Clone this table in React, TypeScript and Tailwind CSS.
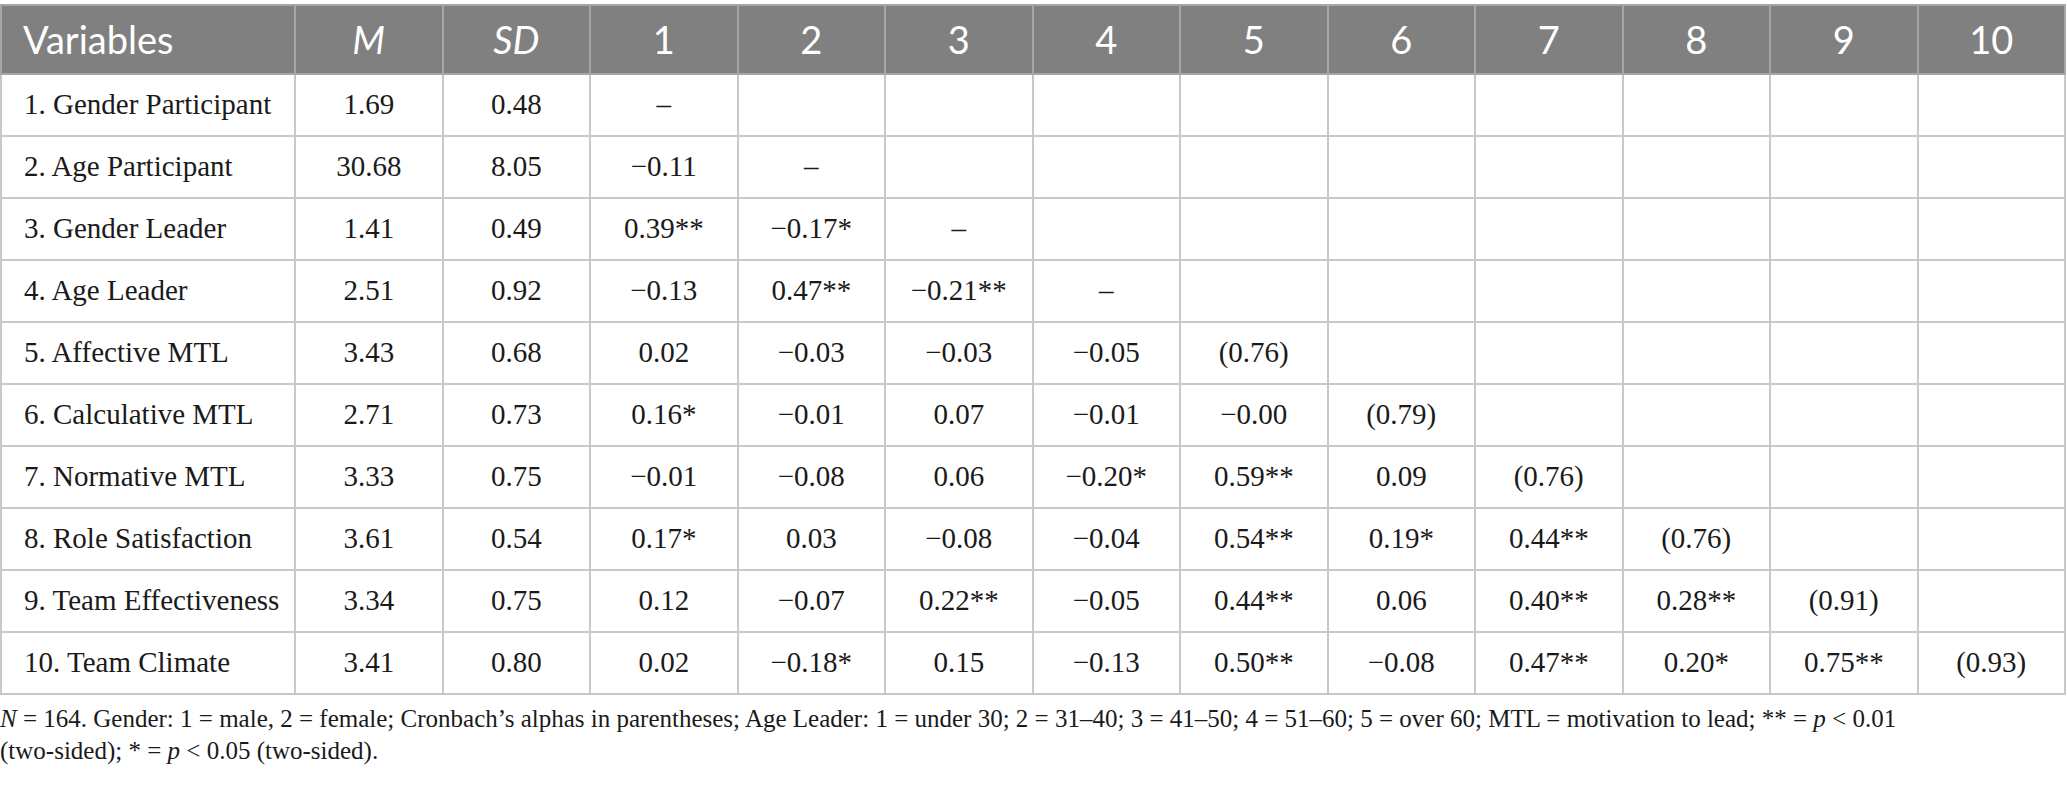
const HEADERS = ['1', '2', '3', '4', '5', '6', '7', '8', '9', '10']

const ROWS: { label: string; m: string; sd: string; cells: string[] }[] = [
  { label: '1. Gender Participant', m: '1.69', sd: '0.48', cells: ['–'] },
  { label: '2. Age Participant', m: '30.68', sd: '8.05', cells: ['−0.11', '–'] },
  { label: '3. Gender Leader', m: '1.41', sd: '0.49', cells: ['0.39**', '−0.17*', '–'] },
  { label: '4. Age Leader', m: '2.51', sd: '0.92', cells: ['−0.13', '0.47**', '−0.21**', '–'] },
  { label: '5. Affective MTL', m: '3.43', sd: '0.68', cells: ['0.02', '−0.03', '−0.03', '−0.05', '(0.76)'] },
  { label: '6. Calculative MTL', m: '2.71', sd: '0.73', cells: ['0.16*', '−0.01', '0.07', '−0.01', '−0.00', '(0.79)'] },
  { label: '7. Normative MTL', m: '3.33', sd: '0.75', cells: ['−0.01', '−0.08', '0.06', '−0.20*', '0.59**', '0.09', '(0.76)'] },
  { label: '8. Role Satisfaction', m: '3.61', sd: '0.54', cells: ['0.17*', '0.03', '−0.08', '−0.04', '0.54**', '0.19*', '0.44**', '(0.76)'] },
  { label: '9. Team Effectiveness', m: '3.34', sd: '0.75', cells: ['0.12', '−0.07', '0.22**', '−0.05', '0.44**', '0.06', '0.40**', '0.28**', '(0.91)'] },
  { label: '10. Team Climate', m: '3.41', sd: '0.80', cells: ['0.02', '−0.18*', '0.15', '−0.13', '0.50**', '−0.08', '0.47**', '0.20*', '0.75**', '(0.93)'] },
]

const serif = "font-['Liberation_Serif',serif]"

export default function App() {
  return (
    <div className="w-[2067px] h-[785px] bg-white pt-[4px] overflow-hidden">
      <table className="w-[2066px] table-fixed border-collapse">
        <colgroup>
          <col className="w-[294px]" />
          <col />
          <col />
          {HEADERS.map(h => <col key={h} />)}
        </colgroup>
        <thead>
          <tr className="h-[69px] bg-[#808080] text-white text-[38px] font-['Lato',sans-serif]">
            <th className="border-2 border-[#a6a6a6] text-left font-normal pl-[21px]">Variables</th>
            <th className="border-2 border-[#a6a6a6] font-normal italic">M</th>
            <th className="border-2 border-[#a6a6a6] font-normal italic">SD</th>
            {HEADERS.map(h => (
              <th key={h} className="border-2 border-[#a6a6a6] font-normal">{h}</th>
            ))}
          </tr>
        </thead>
        <tbody className={`${serif} text-[29px] text-[#1a1a1a]`}>
          {ROWS.map(row => (
            <tr key={row.label} className="h-[62px]">
              <td className="border-2 border-[#c8c8c8] pl-[22px] whitespace-nowrap">{row.label}</td>
              <td className="border-2 border-[#c8c8c8] text-center">{row.m}</td>
              <td className="border-2 border-[#c8c8c8] text-center">{row.sd}</td>
              {HEADERS.map((h, i) => (
                <td key={h} className="border-2 border-[#c8c8c8] text-center whitespace-nowrap">
                  {row.cells[i] ?? ''}
                </td>
              ))}
            </tr>
          ))}
        </tbody>
      </table>
      <p className={`${serif} text-[25px] leading-[32px] text-[#1a1a1a] pt-[8px] whitespace-nowrap`}>
        <i>N</i> = 164. Gender: 1 = male, 2 = female; Cronbach’s alphas in parentheses; Age Leader: 1 = under 30; 2 = 31–40; 3 = 41–50; 4 = 51–60; 5 = over 60; MTL = motivation to lead; ** = <i>p</i> &lt; 0.01
        <br />
        (two-sided); * = <i>p</i> &lt; 0.05 (two-sided).
      </p>
    </div>
  )
}
